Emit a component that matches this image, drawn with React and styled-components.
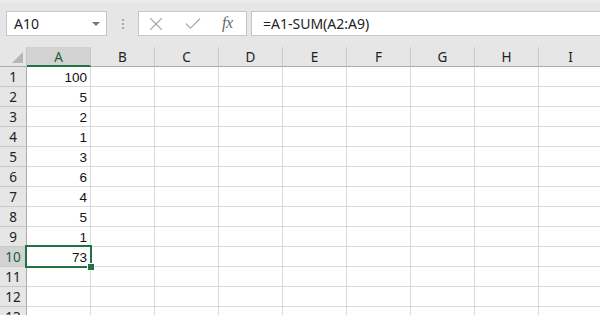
import React from "react";
import styled, { createGlobalStyle } from "styled-components";
import { X, Check } from "lucide-react";

const GlobalStyle = createGlobalStyle`
  body {
    margin: 0;
    background: #ffffff;
    overflow: hidden;
  }
`;

const GREEN = "#217346";
const columns = ["A", "B", "C", "D", "E", "F", "G", "H", "I"];
const values = ["100", "5", "2", "1", "3", "6", "4", "5", "1", "73", "", "", ""];
const SELECTED_ROW = 10;

const Page = styled.div`
  width: 600px;
  height: 315px;
  overflow: hidden;
  background: #fff;
  font-family: "Liberation Sans", Arial, sans-serif;
`;

const Toolbar = styled.div`
  height: 47px;
  box-sizing: border-box;
  background: #e6e6e6;
  border-top: 3px solid #ececec;
  padding: 8px 0 0 6px;
  display: flex;
  align-items: flex-start;
`;

const NameBox = styled.div`
  width: 101px;
  height: 25px;
  box-sizing: border-box;
  background: #fff;
  border: 1px solid #c6c6c6;
  display: flex;
  align-items: center;
  justify-content: space-between;
  padding: 0 6px 0 7px;
  font-family: "Noto Sans", sans-serif;
  font-size: 14px;
  color: #222;
`;

const Caret = styled.span`
  width: 0;
  height: 0;
  border-left: 4px solid transparent;
  border-right: 4px solid transparent;
  border-top: 4px solid #777;
`;

const Grip = styled.div`
  width: 31px;
  height: 25px;
  display: flex;
  flex-direction: column;
  align-items: center;
  justify-content: center;
  gap: 2px;
`;

const Dot = styled.span`
  width: 2px;
  height: 2px;
  background: #a8a8a8;
`;

const Buttons = styled.div`
  width: 109px;
  height: 25px;
  box-sizing: border-box;
  background: #fff;
  border: 1px solid #c6c6c6;
  display: flex;
  align-items: center;
  padding-left: 6px;
  color: #a9a9a9;

  svg:nth-child(2) {
    margin-left: 16px;
  }
`;

const Fx = styled.span`
  font-family: "Liberation Serif", serif;
  font-style: italic;
  font-size: 16px;
  color: #666;
  letter-spacing: -0.5px;
  margin-left: 19px;
  margin-top: -1px;
`;

const Formula = styled.div`
  flex: 1;
  margin-left: 4px;
  height: 25px;
  box-sizing: border-box;
  background: #fff;
  border: 1px solid #c6c6c6;
  border-right: none;
  display: flex;
  align-items: center;
  padding-left: 11px;
  font-family: "Noto Sans", sans-serif;
  font-size: 14px;
  color: #222;
`;

const Sheet = styled.div`
  display: grid;
  grid-template-columns: 27px repeat(9, 64px);
  grid-auto-rows: 20px;
`;

const Corner = styled.div`
  background: #e6e6e6;
  border-right: 1px solid #c8c8c8;
  border-bottom: 1px solid #ababab;
  box-sizing: border-box;
  display: flex;
  align-items: flex-end;
  justify-content: flex-end;
  padding: 0 3px 3px 0;
`;

const CornerMark = styled.span`
  width: 0;
  height: 0;
  border-left: 11px solid transparent;
  border-bottom: 11px solid #b6b6b6;
`;

const ColHead = styled.div`
  background: ${(p) => (p.$active ? "#d2d2d2" : "#e6e6e6")};
  border-right: 1px solid #c8c8c8;
  border-bottom: ${(p) => (p.$active ? `2px solid ${GREEN}` : "1px solid #ababab")};
  box-sizing: border-box;
  display: flex;
  align-items: center;
  justify-content: center;
  padding-top: ${(p) => (p.$active ? "1px" : "0")};
  font-family: "Noto Sans", sans-serif;
  font-size: 13.5px;
  color: ${(p) => (p.$active ? "#1d5c38" : "#222")};
`;

const RowHead = styled.div`
  background: ${(p) => (p.$active ? "#d2d2d2" : "#e6e6e6")};
  border-right: 1px solid #ababab;
  border-bottom: 1px solid #c8c8c8;
  box-sizing: border-box;
  display: flex;
  align-items: center;
  justify-content: center;
  font-family: "Noto Sans", sans-serif;
  font-size: 13.5px;
  color: ${(p) => (p.$active ? "#1d5c38" : "#222")};
`;

const Cell = styled.div`
  position: relative;
  border-right: 1px solid #d9d9d9;
  border-bottom: 1px solid #d9d9d9;
  box-sizing: border-box;
  display: flex;
  align-items: center;
  justify-content: flex-end;
  padding: 2px 3px 0 0;
  font-size: 13.5px;
  color: #111;
`;

const Selection = styled.div`
  position: absolute;
  z-index: 2;
  top: -2px;
  left: -2px;
  right: -2px;
  bottom: -2px;
  border: 2px solid ${GREEN};
  pointer-events: none;
`;

const Handle = styled.span`
  position: absolute;
  right: -5px;
  bottom: -5px;
  width: 6px;
  height: 6px;
  background: ${GREEN};
  border: 1px solid #fff;
`;

export default function App() {
  return (
    <Page>
      <GlobalStyle />
      <Toolbar>
        <NameBox>
          A10
          <Caret />
        </NameBox>
        <Grip>
          <Dot />
          <Dot />
          <Dot />
        </Grip>
        <Buttons>
          <X size={22} strokeWidth={1.2} />
          <Check size={20} strokeWidth={1.5} />
          <Fx>fx</Fx>
        </Buttons>
        <Formula>=A1-SUM(A2:A9)</Formula>
      </Toolbar>
      <Sheet>
        <Corner>
          <CornerMark />
        </Corner>
        {columns.map((c) => (
          <ColHead key={c} $active={c === "A"}>
            {c}
          </ColHead>
        ))}
        {values.map((v, i) => {
          const row = i + 1;
          const active = row === SELECTED_ROW;
          return (
            <React.Fragment key={row}>
              <RowHead $active={active}>{row}</RowHead>
              {columns.map((c) => (
                <Cell key={c}>
                  {c === "A" ? v : ""}
                  {c === "A" && active && (
                    <Selection>
                      <Handle />
                    </Selection>
                  )}
                </Cell>
              ))}
            </React.Fragment>
          );
        })}
      </Sheet>
    </Page>
  );
}
